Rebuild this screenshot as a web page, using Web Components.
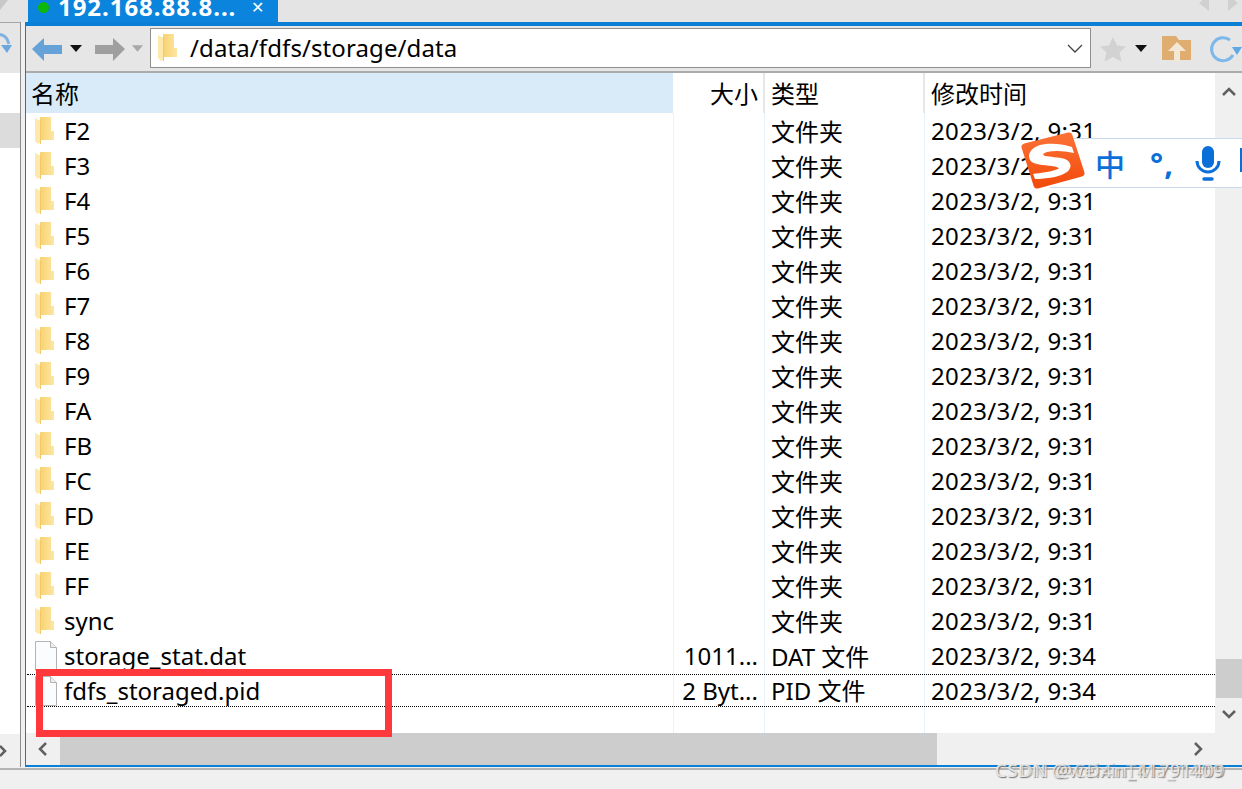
<!DOCTYPE html>
<html>
<head>
<meta charset="utf-8">
<title>files</title>
<style>
  html, body { margin: 0; height: 100%; overflow: hidden; }
  body { background: #f0f0f0; font: 24px "Noto Sans", "Noto Sans CJK SC", sans-serif; color: #000; }
</style>
</head>
<body>
<sftp-window>
  <tab-bar slot="tabs" label="192.168.88.8..."></tab-bar>
  <side-pane slot="side"></side-pane>
  <path-bar slot="bar" path="/data/fdfs/storage/data"></path-bar>
  <file-list slot="list"></file-list>
</sftp-window>
<ime-bar></ime-bar>
<mark-box></mark-box>
<water-mark></water-mark>

<script>
const FOLDER = `<svg width="20" height="28" viewBox="0 0 20 28"><defs><linearGradient id="fb" x1="0" x2="1" y1="0" y2="0"><stop offset="0" stop-color="#f8d270"/><stop offset="1" stop-color="#fde6a4"/></linearGradient></defs><path d="M5 0h11v14h3v9H5z" fill="url(#fb)"/><path d="M0 1l6 3v23l-2-1-1 1-3-3z" fill="#fde9ac"/><path d="M5.500 3.500V27" stroke="#f4c868" stroke-width="1"/></svg>`;
const FILE = `<svg width="22" height="30" viewBox="0 0 22 30"><path d="M.5.500h15l6 6v23H.5z" fill="#fbfcfd" stroke="#b4b4b4"/><path d="M15.500.500v6h6" fill="#eee" stroke="#b4b4b4"/></svg>`;

// window frame: tabs on top, the side pane, then the active session
class SftpWindow extends HTMLElement {
  constructor() {
    super();
    const shadow = this.attachShadow({mode: 'open'});
    shadow.innerHTML = `<style>
  :host { display: grid; grid-template-columns: 25px 1fr; grid-template-rows: 22px 745px 3px 19px; height: 789px; background: #f0f0f0; }
  .tabs { grid-column: 1 / 3; }
  .main { border: solid #0a7fd6; border-width: 4px 0 2px 1px; display: flex; flex-direction: column; min-height: 0; background: #fff; }
  .foot { grid-column: 1 / 3; border-bottom: 2px solid #b4b4b4; }
</style>
<div class="tabs"><slot name="tabs"></slot></div>
<slot name="side"></slot>
<div class="main"><slot name="bar"></slot><slot name="list"></slot></div>
<div class="foot"></div>`;
  }
}
customElements.define('sftp-window', SftpWindow);

class TabBar extends HTMLElement {
  constructor() {
    super();
    const shadow = this.attachShadow({mode: 'open'});
    shadow.innerHTML = `<style>
  :host { display: flex; height: 22px; background: #e4e4e4; overflow: hidden; }
  .frag { width: 28px; flex: none; display: block; }
  .tab { width: 250px; background: #0a84dc; color: #fff; display: flex; align-items: center; height: 22px; box-sizing: border-box; padding: 0 0 9px 10px; font-weight: 700; }
  .dot { width: 11px; height: 11px; border-radius: 50%; background: #0cb80c; margin-right: 9px; flex: none; margin-top: 1px; }
  .label { white-space: nowrap; letter-spacing: .95px; }
  .close { margin-left: 15px; font-weight: 400; font-size: 16px; line-height: 12px; }
  .nav { margin-left: auto; display: flex; gap: 19px; padding: 0 0 16px 0; align-items: center; margin-right: 4px; }
  .nav i { display: block; border: 6px solid transparent; border-top-width: 8px; border-bottom-width: 8px; }
  .nav i:first-child { border-right: 10px solid #d0d0d0; border-left: 0; }
  .nav i:last-child { border-left: 10px solid #d0d0d0; border-right: 0; }
</style>
<svg class="frag" viewBox="0 0 28 22"><path d="M0 0h8L0 10z" fill="#c8c8c8"/></svg>
<div class="tab"><span class="dot"></span><span class="label">${this.getAttribute('label')}</span><span class="close">✕</span></div>
<div class="nav"><i></i><i></i></div>`;
  }
}
customElements.define('tab-bar', TabBar);

class SidePane extends HTMLElement {
  constructor() {
    super();
    const shadow = this.attachShadow({mode: 'open'});
    shadow.innerHTML = `<style>
  :host { display: flex; flex-direction: column; background: #fff; border-right: 4px solid #f0f0f0; position: relative; }
  .inner { width: 20px; border-right: 1px solid #8c8c8c; flex: 1; display: flex; flex-direction: column; }
  .tool { height: 51px; background: #e6e6e6; border-top: 1px solid #a6a6a6; overflow: hidden; box-sizing: border-box; padding-top: 9px; }
  .gap { height: 40px; }
  .sel { height: 35px; background: #dcdcdc; }
  .fill { flex: 1; }
  .scroll { height: 33px; background: #f0f0f0; display: flex; align-items: center; }
</style>
<div class="inner">
  <div class="tool"><svg width="14" height="30" viewBox="0 0 14 30"><path d="M-8 4a11 11 0 0 1 15 3l2 5" fill="none" stroke="#7fb2e0" stroke-width="3"/><path d="M1 13l11 0-5 8z" fill="#6ca6dc"/></svg></div>
  <div class="gap"></div>
  <div class="sel"></div>
  <div class="fill"></div>
  <div class="scroll"><svg width="8" height="14" viewBox="0 0 8 14"><path d="M0 2l5 5-5 5" fill="none" stroke="#606060" stroke-width="2.500"/></svg></div>
</div>`;
  }
}
customElements.define('side-pane', SidePane);

class PathBar extends HTMLElement {
  constructor() {
    super();
    const shadow = this.attachShadow({mode: 'open'});
    shadow.innerHTML = `<style>
  :host { display: flex; align-items: center; height: 47px; background: #e6e6e6; border-bottom: 2px solid #ababab; box-sizing: border-box; flex: none; }
  svg { flex: none; display: block; }
  .box { width: 941px; height: 40px; box-sizing: border-box; margin: -1px 0 0 0; border: 1px solid #8f8f8f; background: #fff; display: flex; align-items: center; }
  .ico { margin: 0 12px 0 7px; display: flex; }
  .path { flex: 1; white-space: nowrap; padding-bottom: 2px; letter-spacing: .1px; }
  .chev { margin-right: 7px; }
</style>
<svg style="margin-left:6px" width="30" height="26" viewBox="0 0 30 26"><path d="M0 13L12 2v7h18v9H12v7z" fill="#64a2d8"/></svg>
<svg style="margin-left:8px" width="12" height="7" viewBox="0 0 12 7"><path d="M0 0h12L6 7z" fill="#111"/></svg>
<svg style="margin-left:13px" width="30" height="26" viewBox="0 0 30 26"><path d="M30 13L18 2v7H0v9h18v7z" fill="#9f9f9f"/></svg>
<svg style="margin-left:7px" width="11" height="7" viewBox="0 0 12 7"><path d="M0 0h12L6 7z" fill="#a8a8a8"/></svg>
<div class="box" style="margin-left:7px">
  <span class="ico">${FOLDER}</span>
  <span class="path">${this.getAttribute('path')}</span>
  <svg class="chev" width="16" height="9" viewBox="0 0 16 9"><path d="M1 1l7 7 7-7" fill="none" stroke="#444" stroke-width="1.300"/></svg>
</div>
<svg style="margin-left:8px" width="28" height="26" viewBox="0 0 28 26"><path d="M14 1l4 8.500 9 1-6.500 6 2 9L14 21l-8.500 4.500 2-9L1 10.500l9-1z" fill="#d2d2d2"/></svg>
<svg style="margin-left:8px" width="12" height="7" viewBox="0 0 12 7"><path d="M0 0h12L6 7z" fill="#111"/></svg>
<svg style="margin-left:15px" width="29" height="26" viewBox="0 0 29 26"><path d="M0 0h14l3 4h12v20H0z" fill="#dfad70"/><path d="M15 6l9 9h-6v11h-6V15H6z" fill="#f3e7d6"/></svg>
<svg style="margin-left:18px" width="33" height="30" viewBox="0 0 33 30"><path d="M21 6A11.500 11.500 0 1 0 24 21" fill="none" stroke="#7db8ea" stroke-width="3"/><path d="M23 13h10l-5 8z" fill="#5fa8e6"/></svg>`;
  }
}
customElements.define('path-bar', PathBar);

class FileList extends HTMLElement {
  constructor() {
    super();
    const shadow = this.attachShadow({mode: 'open'});
    const folders = ['F2','F3','F4','F5','F6','F7','F8','F9','FA','FB','FC','FD','FE','FF','sync'];
    let rows = folders.map(n => `<file-row kind="folder" name="${n}" type="文件夹" date="2023/3/2, 9:31"></file-row>`).join('');
    rows += `<file-row kind="file" name="storage_stat.dat" size="1011..." type="DAT 文件" date="2023/3/2, 9:34"></file-row>`;
    rows += `<file-row kind="file" focus name="fdfs_storaged.pid" size="2 Byt..." type="PID 文件" date="2023/3/2, 9:34"></file-row>`;
    shadow.innerHTML = `<style>
  :host { display: grid; grid-template-columns: 1fr 27px; grid-template-rows: 1fr 32px; flex: 1; min-height: 0; background: #fff; }
  .table { display: flex; flex-direction: column; position: relative; overflow: hidden; }
  .head { display: grid; grid-template-columns: var(--cols); height: 40px; align-items: center; flex: none; }
  .head > div { height: 100%; display: flex; align-items: center; box-sizing: border-box; padding-left: 6px; padding-bottom: 2px; border-right: 2px solid #e6e6e6; }
  .head > div:first-child { background: #d9ebf9; border: 0; padding-left: 5px; }
  .head > div:nth-child(2) { justify-content: flex-end; padding-right: 5px; }
  .head > div:last-child { border: 0; }
  .body { flex: 1; background: linear-gradient(#e8f2fd,#e8f2fd) 647px 0/1px 100% no-repeat, linear-gradient(#e8f2fd,#e8f2fd) 738px 0/1px 100% no-repeat, linear-gradient(#e8f2fd,#e8f2fd) 898px 0/1px 100% no-repeat; }
  .vbar { background: #f0f0f0; display: flex; flex-direction: column; align-items: center; position: relative; }
  .vbar svg { flex: none; }
  .up { margin-top: 14px; }
  .thumb { margin-top: 563px; height: 39px; width: 100%; background: #cdcdcd; margin-left: 2px; flex: none; }
  .down { margin-top: 12px; }
  .hbar { background: #f0f0f0; display: flex; align-items: center; grid-column: 1 / 3; }
  .hthumb { margin-left: 13px; width: 877px; height: 100%; background: #cdcdcd; }
</style>
<div class="table" style="--cols: 647px 92px 160px 1fr">
  <div class="head"><div>名称</div><div>大小</div><div>类型</div><div>修改时间</div></div>
  <div class="body">${rows}</div>
</div>
<div class="vbar">
  <svg class="up" width="14" height="9" viewBox="0 0 14 9"><path d="M1 8l6-6 6 6" fill="none" stroke="#606060" stroke-width="2.500"/></svg>
  <div class="thumb"></div>
  <svg class="down" width="14" height="9" viewBox="0 0 14 9"><path d="M1 1l6 6 6-6" fill="none" stroke="#606060" stroke-width="2.500"/></svg>
</div>
<div class="hbar">
  <svg style="margin-left:12px;flex:none" width="9" height="14" viewBox="0 0 9 14"><path d="M8 1L2 7l6 6" fill="none" stroke="#606060" stroke-width="2.500"/></svg>
  <div class="hthumb"></div>
  <svg style="margin-left:257px;flex:none" width="9" height="14" viewBox="0 0 9 14"><path d="M1 1l6 6-6 6" fill="none" stroke="#606060" stroke-width="2.500"/></svg>
</div>`;
  }
}
customElements.define('file-list', FileList);

class FileRow extends HTMLElement {
  constructor() {
    super();
    const shadow = this.attachShadow({mode: 'open'});
    const a = n => this.getAttribute(n) || '';
    shadow.innerHTML = `<style>
  :host { display: grid; grid-template-columns: 647px 92px 160px 1fr; height: 35px; align-items: center; white-space: nowrap; box-sizing: border-box; }
  :host([focus]) { height: 33px; line-height: 29px; margin: 1px 0 0 1px; grid-template-columns: 646px 92px 160px 1fr; border-top: 1px dotted #000; border-bottom: 1px dotted #000; }
  .name { display: flex; align-items: center; padding-left: 9px; height: 30px; }
  :host([focus]) .name { padding-left: 8px; }
  .ico { width: 29px; display: flex; }
  .size { text-align: right; padding-right: 7px; }
  .type { padding-left: 6px; }
  .date { padding-left: 6px; letter-spacing: .35px; }
</style>
<div class="name"><span class="ico">${a('kind') === 'folder' ? FOLDER : FILE}</span><span>${a('name')}</span></div>
<div class="size">${a('size')}</div>
<div class="type">${a('type')}</div>
<div class="date">${a('date')}</div>`;
  }
}
customElements.define('file-row', FileRow);

// input method bar floating over the list
class ImeBar extends HTMLElement {
  constructor() {
    super();
    const shadow = this.attachShadow({mode: 'open'});
    shadow.innerHTML = `<style>
  :host { position: absolute; left: 1020px; top: 130px; width: 222px; height: 60px; }
  .strip { position: absolute; left: 30px; right: 0; top: 8px; height: 48px; background: #fff; border: solid #c8daf0; border-width: 1px 0; display: flex; align-items: center; color: #0a6fd8; }
  .zh { margin-left: 45px; font-size: 30px; line-height: 1; font-family: "Noto Sans CJK SC", sans-serif; font-weight: 500; }
  .dot { margin-left: 25px; font-size: 31px; font-weight: 700; line-height: 1; letter-spacing: 1px; }
  svg { position: absolute; }
  .bar { position: absolute; left: 220px; top: 18px; width: 3px; height: 24px; background: #0a6fd8; }
</style>
<div class="strip"><span class="zh">中</span><span class="dot">°,</span></div>
<svg style="left:175px;top:16px" width="26" height="36" viewBox="0 0 26 36"><rect x="7" y="0" width="12" height="22" rx="6" fill="#0a6fd8"/><path d="M2 15a11 11 0 0 0 22 0" fill="none" stroke="#0a6fd8" stroke-width="3"/><path d="M9 33h8" stroke="#0a6fd8" stroke-width="3.500" stroke-linecap="round"/></svg>
<div class="bar"></div>
<svg style="left:0;top:0" width="66" height="62" viewBox="0 0 66 62"><defs><linearGradient id="g" x1="0" y1="0" x2="0" y2="1"><stop offset="0" stop-color="#fb7034"/><stop offset="1" stop-color="#f24c0c"/></linearGradient></defs><path d="M5 17L49 6l12 37-44 12z" fill="url(#g)" stroke="url(#g)" stroke-width="7" stroke-linejoin="round"/><path d="M52 17C40 13 28 13 20 15 11 18 7 24 10 30c3 5 14 5 22 6 6 1 8 2 6 3-8 3-18 4-25 5l2 5c11 0 25-2 32-7 5-4 5-10-2-13-7-2-15-2-20-3-3-1-2-3 2-4 8-2 18-1 27 1z" fill="#fff"/></svg>`;
  }
}
customElements.define('ime-bar', ImeBar);

class MarkBox extends HTMLElement {
  constructor() {
    super();
    this.attachShadow({mode: 'open'}).innerHTML = `<style>
  :host { position: absolute; left: 36px; top: 669px; width: 356px; height: 68px; box-sizing: border-box; border: 7px solid #ff383c; }
</style>`;
  }
}
customElements.define('mark-box', MarkBox);

class WaterMark extends HTMLElement {
  constructor() {
    super();
    this.attachShadow({mode: 'open'}).innerHTML = `<style>
  :host { position: absolute; left: 995px; top: 758px; width: 240px; height: 24px; font: 18px "Noto Sans", sans-serif; color: #e6e6e6; white-space: nowrap; text-shadow: 1px 1px 1px #808080; letter-spacing: .8px; }
  span { position: absolute; left: 0; top: 0; }
  .b { opacity: .7; letter-spacing: 1.6px; }
</style>
<span>CSDN @weixin_41791409</span><span class="b">CSDN @CD4nTMa_1409</span>`;
  }
}
customElements.define('water-mark', WaterMark);
</script>
</body>
</html>
